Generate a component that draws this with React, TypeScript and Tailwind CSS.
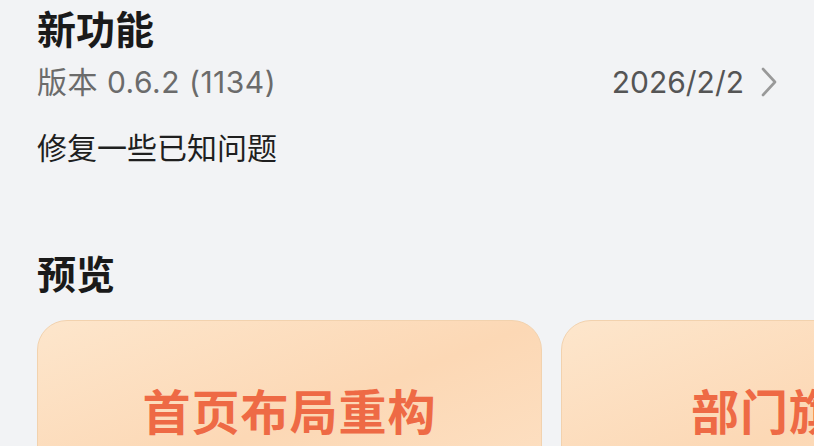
const cards = ["首页布局重构", "部门旗舰店"];

export default function App() {
  return (
    <div
      className="min-h-screen w-full overflow-hidden bg-[#f2f3f5]"
      style={{ fontFamily: 'Inter, "Noto Sans CJK SC", sans-serif' }}
    >
      {/* 新功能 */}
      <section className="px-[37px] pt-[7px]">
        <h1 className="text-[39px] font-bold leading-[46px] text-[#1a1a1a]">新功能</h1>
        <div className="mt-[9px] flex items-center justify-between">
          <span className="text-[30px] leading-[40px] tracking-[0.5px] text-[#6b6b6b]">版本 0.6.2 (1134)</span>
          <div className="flex items-center gap-[17px]">
            <span className="text-[30px] leading-[40px] text-[#555]">2026/2/2</span>
            <svg width="16" height="30" viewBox="0 0 16 30" fill="none">
              <path d="M2 2 L14 15 L2 28" stroke="#999" strokeWidth="2.6" strokeLinecap="round" strokeLinejoin="round" />
            </svg>
          </div>
        </div>
        <p className="mt-[26px] text-[30px] leading-[40px] text-[#1f1f1f]">修复一些已知问题</p>
      </section>

      {/* 预览 */}
      <section className="pt-[84px]">
        <h2 className="px-[37px] text-[39px] font-bold leading-[46px] text-[#1a1a1a]">预览</h2>
        <div className="mt-[22px] flex gap-[19px] pl-[37px]">
          {cards.map((c) => (
            <div
              key={c}
              className="flex h-[200px] w-[505px] shrink-0 justify-center rounded-[30px] border border-[#f2d2ae] bg-gradient-to-br from-[#fde6cc] via-[#fcd8b5] to-[#fde2c6] pt-[62px]"
            >
              <span className="text-[48px] font-bold leading-[60px] tracking-[1px] text-[#ee6a45]">{c}</span>
            </div>
          ))}
        </div>
      </section>
    </div>
  );
}
